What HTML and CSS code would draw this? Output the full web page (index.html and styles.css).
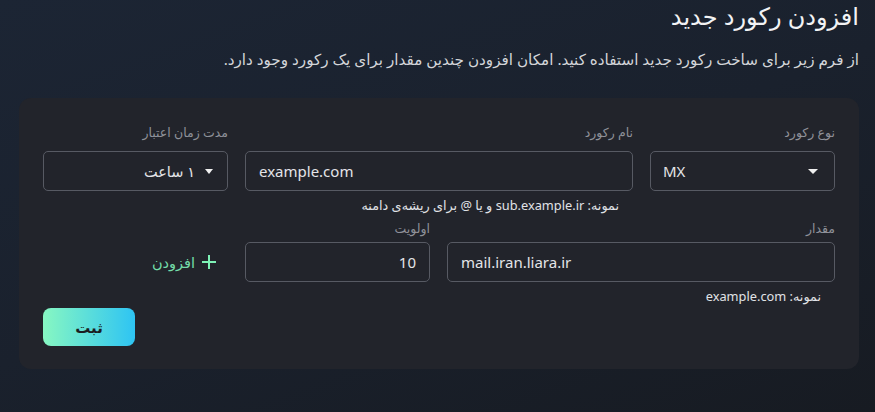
FILE: index.html
```html
<!DOCTYPE html>
<html lang="fa" dir="rtl">
<head>
<meta charset="utf-8">
<title>افزودن رکورد جدید</title>
<link rel="stylesheet" href="styles.css">
</head>
<body>
<div class="page">
  <h1 class="title">افزودن رکورد جدید</h1>
  <p class="desc">از فرم زیر برای ساخت رکورد جدید استفاده کنید. امکان افزودن چندین مقدار برای یک رکورد وجود دارد.</p>
  <div class="card">
    <div class="row row-top">
      <div class="field">
        <label class="label">نوع رکورد</label>
        <div class="control select select-ltr" dir="ltr">
          <span class="val">MX</span>
          <span class="caret"></span>
        </div>
      </div>
      <div class="field">
        <label class="label">نام رکورد</label>
        <div class="control input-ltr" dir="ltr"><span class="val">example.com</span></div>
        <div class="hint">نمونه: sub.example.ir و یا @ برای ریشه‌ی دامنه</div>
      </div>
      <div class="field">
        <label class="label">مدت زمان اعتبار</label>
        <div class="control select select-rtl">
          <span class="caret caret-sm"></span>
          <span class="val">۱ ساعت</span>
        </div>
      </div>
    </div>
    <div class="row row-bottom">
      <div class="field">
        <label class="label">مقدار</label>
        <div class="control input-ltr" dir="ltr"><span class="val">mail.iran.liara.ir</span></div>
        <div class="hint">نمونه: example.com</div>
      </div>
      <div class="field">
        <label class="label">اولویت</label>
        <div class="control input-num" dir="ltr"><span class="val">10</span></div>
      </div>
      <div class="field">
        <span class="label">&nbsp;</span>
        <button class="add-btn" type="button">
          <svg class="plus" width="14" height="14" viewBox="0 0 14 14"><path d="M7 0v14M0 7h14" stroke="#7ef2b6" stroke-width="2"/></svg>
          <span>افزودن</span>
        </button>
      </div>
    </div>
    <div class="actions">
      <button class="submit" type="button">ثبت</button>
    </div>
  </div>
</div>
</body>
</html>
```
FILE: styles.css
```css
* { box-sizing: border-box; }
html, body { margin: 0; height: 100%; }
body {
  font-family: "Noto Sans", "DejaVu Sans", sans-serif;
  background: linear-gradient(160deg, #1c2534 0%, #1a212d 50%, #171b22 100%);
  color: #e6e7ea;
  overflow: hidden;
  padding: 0 16px 0 19px;
}
.title {
  margin: 0;
  padding-top: 1px;
  font-size: 24px;
  font-weight: normal;
  line-height: 30px;
  color: #f2f3f5;
}
.desc {
  margin: 17px 0 0;
  font-size: 15.2px;
  line-height: 22px;
  color: #d4d6da;
}
.card {
  margin-top: 28px;
  background: #22242b;
  border-radius: 12px;
  padding: 25px 24px 23px;
}
.row {
  display: grid;
  column-gap: 17px;
}
.row-top { grid-template-columns: 185px 1fr 185px; }
.row-bottom { grid-template-columns: 388px 185px 1fr; margin-top: 5px; }
.field { display: flex; flex-direction: column; }
.label {
  font-size: 12.5px;
  line-height: 20px;
  color: #8f9199;
  margin-bottom: 8px;
}
.row-bottom .label { margin-bottom: 3px; }
.control {
  height: 40px;
  border: 1px solid #575a63;
  border-radius: 5px;
  display: flex;
  align-items: center;
  font-size: 15px;
  color: #e4e5e8;
}
.select-ltr { padding: 0 16px 0 12px; justify-content: space-between; }
.select-rtl { padding: 0 14px; justify-content: flex-start; gap: 10px; font-size: 14.5px; }
.input-ltr { padding: 0 13px; }
.input-num { padding: 0 13px; justify-content: flex-end; }
.caret {
  width: 0; height: 0;
  border-left: 5px solid transparent;
  border-right: 5px solid transparent;
  border-top: 5px solid #f0f0f0;
}
.caret-sm {
  border-left-width: 4px;
  border-right-width: 4px;
  border-top-width: 5px;
}
.hint {
  font-size: 12.8px;
  line-height: 18px;
  color: #e0e2e6;
  margin-top: 5px;
  padding-right: 14px;
}
.add-btn {
  align-self: flex-start;
  height: 40px;
  margin-right: 12px;
  background: none;
  border: 0;
  padding: 0;
  display: flex;
  align-items: center;
  gap: 7px;
  font-family: inherit;
  font-size: 14.5px;
  color: #74dca9;
  cursor: pointer;
}
.actions { margin-top: 3px; display: flex; justify-content: flex-end; }
.submit {
  width: 92px;
  height: 38px;
  border: 0;
  border-radius: 8px;
  background: linear-gradient(90deg, #87f7c2 0%, #2ec4f3 100%);
  font-family: inherit;
  font-size: 15px;
  font-weight: bold;
  color: #1b1d22;
}
```
